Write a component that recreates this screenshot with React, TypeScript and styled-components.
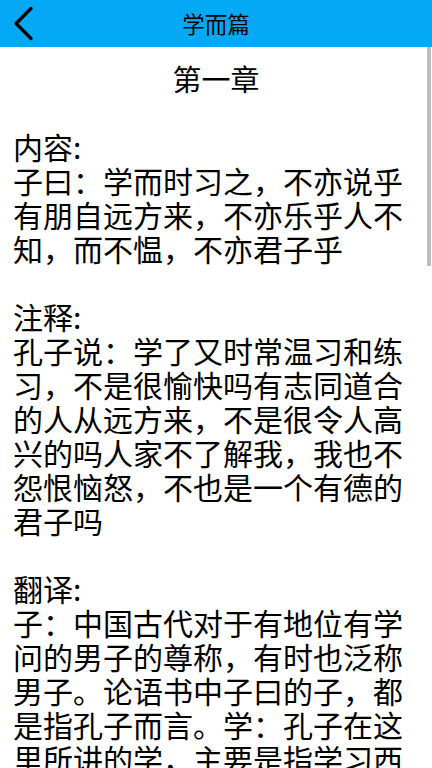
import React from "react";
import styled, { createGlobalStyle } from "styled-components";

const GlobalStyle = createGlobalStyle`
  html, body {
    margin: 0;
    padding: 0;
    height: 100%;
    overflow: hidden;
    background: #ffffff;
  }
  body {
    font-family: "Noto Sans CJK SC", "Noto Sans", sans-serif;
    color: #000;
  }
`;

const Page = styled.div`
  position: relative;
  width: 432px;
  height: 768px;
  overflow: hidden;
  display: flex;
  flex-direction: column;
`;

const TopBar = styled.header`
  height: 47px;
  flex-shrink: 0;
  background: #03a9f4;
  display: grid;
  grid-template-columns: 60px 1fr 60px;
  align-items: center;
`;

const BackButton = styled.button`
  border: none;
  background: none;
  padding: 0 0 0 11px;
  height: 47px;
  display: flex;
  align-items: center;
  cursor: pointer;
`;

const TopTitle = styled.h1`
  margin: 0;
  text-align: center;
  font-size: 22.5px;
  font-weight: 400;
  line-height: 47px;
`;

const Scroller = styled.main`
  flex: 1;
  overflow: hidden;
  padding: 14px 0 0 13px;
`;

const ChapterTitle = styled.h2`
  margin: 0 0 34px -13px;
  text-align: center;
  font-size: 29px;
  font-weight: 400;
  line-height: 34px;
`;

const Section = styled.section`
  width: 400px;
  margin-bottom: 34px;
`;

const Text = styled.p`
  margin: 0;
  font-size: 30px;
  line-height: 34px;
  word-break: break-all;
`;

const ScrollThumb = styled.div`
  position: absolute;
  right: 1px;
  top: 47px;
  width: 4px;
  height: 219px;
  background: #bdbdbd;
`;

const sections = [
  {
    label: "内容:",
    body: "子曰：学而时习之，不亦说乎有朋自远方来，不亦乐乎人不知，而不愠，不亦君子乎",
  },
  {
    label: "注释:",
    body: "孔子说：学了又时常温习和练习，不是很愉快吗有志同道合的人从远方来，不是很令人高兴的吗人家不了解我，我也不怨恨恼怒，不也是一个有德的君子吗",
  },
  {
    label: "翻译:",
    body: "子：中国古代对于有地位有学问的男子的尊称，有时也泛称男子。论语书中子曰的子，都是指孔子而言。学：孔子在这里所讲的学，主要是指学习西周的礼、乐、诗、书等传统文化典籍。时习：在周秦时代，时字用作副词，意为在一定的时候或者在适当的时候。",
  },
];

function App() {
  return (
    <Page>
      <GlobalStyle />
      <TopBar>
        <BackButton aria-label="返回">
          <svg width="24" height="36" viewBox="0 0 24 36">
            <path
              d="M20 2.5 L5 17.5 L20 32.5"
              fill="none"
              stroke="#000"
              strokeWidth="3.4"
              strokeLinecap="round"
              strokeLinejoin="round"
            />
          </svg>
        </BackButton>
        <TopTitle>学而篇</TopTitle>
        <div />
      </TopBar>
      <Scroller>
        <ChapterTitle>第一章</ChapterTitle>
        {sections.map((s) => (
          <Section key={s.label}>
            <Text>{s.label}</Text>
            <Text>{s.body}</Text>
          </Section>
        ))}
      </Scroller>
      <ScrollThumb />
    </Page>
  );
}

export default App;
